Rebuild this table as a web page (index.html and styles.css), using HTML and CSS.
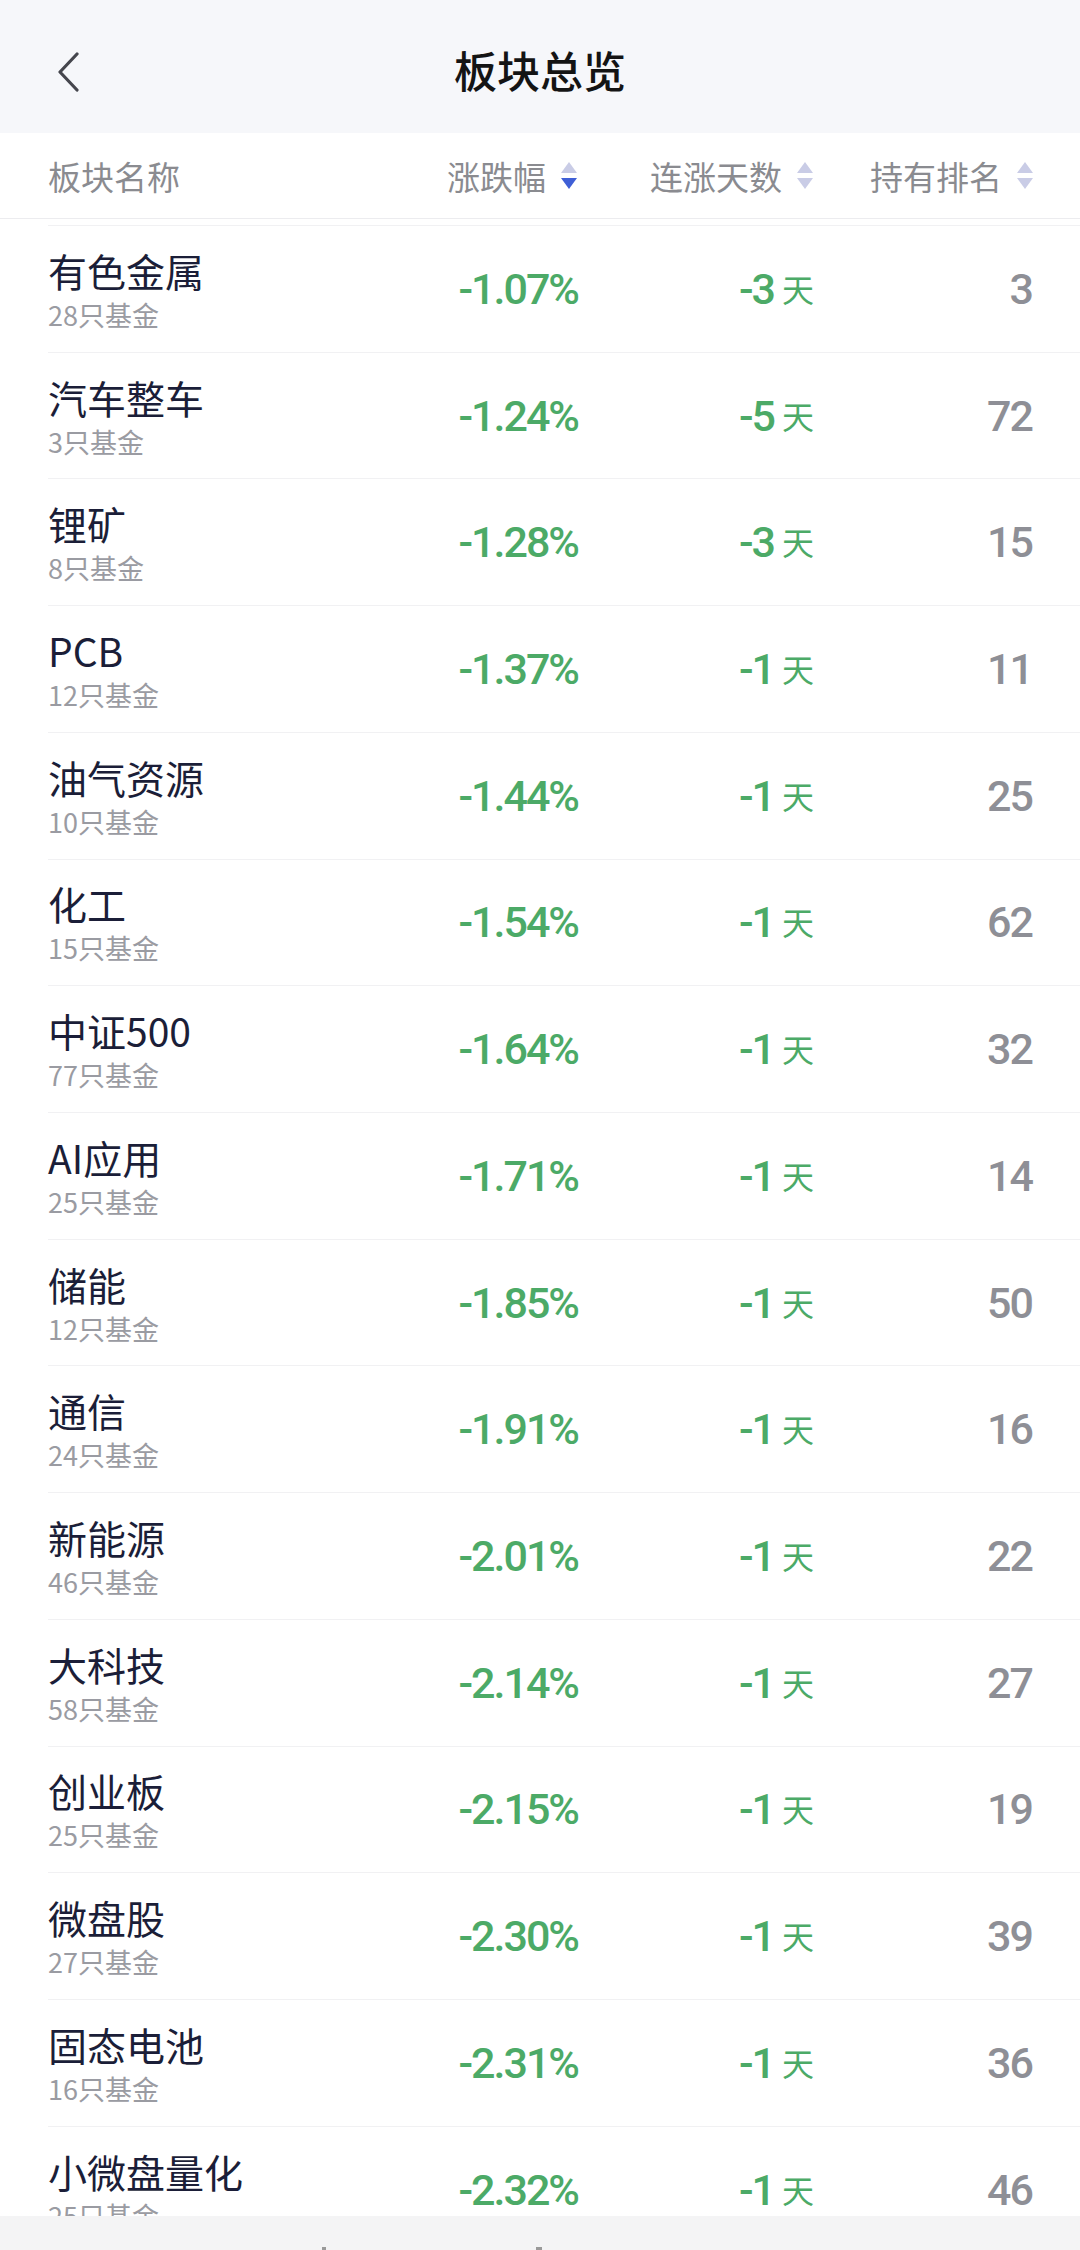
FILE: index.html
```html
<!DOCTYPE html>
<html lang="zh-CN">
<head>
<meta charset="utf-8">
<title>板块总览</title>
<link rel="stylesheet" href="styles.css">
</head>
<body>
<div class="page">
  <header class="topbar">
    <div class="back">
      <svg width="24" height="40" viewBox="0 0 24 40"><polyline points="21,2 4,20 21,38" fill="none" stroke="#45464d" stroke-width="3.2" stroke-linecap="round" stroke-linejoin="round"/></svg>
    </div>
    <div class="title">板块总览</div>
    <div class="back-spacer"></div>
  </header>

  <div class="colhead">
    <div class="ch ch-name">板块名称</div>
    <div class="ch ch-sort">涨跌幅
      <svg class="sort" width="18" height="30" viewBox="0 0 18 30"><polygon points="9,1 17,12 1,12" fill="#c9cce6"/><polygon points="1,17 17,17 9,28" fill="#3f5fd6"/></svg>
    </div>
    <div class="ch ch-sort">连涨天数
      <svg class="sort" width="18" height="30" viewBox="0 0 18 30"><polygon points="9,1 17,12 1,12" fill="#c9cce6"/><polygon points="1,17 17,17 9,28" fill="#c9cce6"/></svg>
    </div>
    <div class="ch ch-sort">持有排名
      <svg class="sort" width="18" height="30" viewBox="0 0 18 30"><polygon points="9,1 17,12 1,12" fill="#c9cce6"/><polygon points="1,17 17,17 9,28" fill="#c9cce6"/></svg>
    </div>
  </div>

  <div class="list">
    <div class="row"><div class="name"><div class="n">有色金属</div><div class="s">28只基金</div></div><div class="val">-1.07%</div><div class="days">-3<span class="d">天</span></div><div class="rank">3</div></div>
    <div class="row"><div class="name"><div class="n">汽车整车</div><div class="s">3只基金</div></div><div class="val">-1.24%</div><div class="days">-5<span class="d">天</span></div><div class="rank">72</div></div>
    <div class="row"><div class="name"><div class="n">锂矿</div><div class="s">8只基金</div></div><div class="val">-1.28%</div><div class="days">-3<span class="d">天</span></div><div class="rank">15</div></div>
    <div class="row"><div class="name"><div class="n">PCB</div><div class="s">12只基金</div></div><div class="val">-1.37%</div><div class="days">-1<span class="d">天</span></div><div class="rank">11</div></div>
    <div class="row"><div class="name"><div class="n">油气资源</div><div class="s">10只基金</div></div><div class="val">-1.44%</div><div class="days">-1<span class="d">天</span></div><div class="rank">25</div></div>
    <div class="row"><div class="name"><div class="n">化工</div><div class="s">15只基金</div></div><div class="val">-1.54%</div><div class="days">-1<span class="d">天</span></div><div class="rank">62</div></div>
    <div class="row"><div class="name"><div class="n">中证500</div><div class="s">77只基金</div></div><div class="val">-1.64%</div><div class="days">-1<span class="d">天</span></div><div class="rank">32</div></div>
    <div class="row"><div class="name"><div class="n">AI应用</div><div class="s">25只基金</div></div><div class="val">-1.71%</div><div class="days">-1<span class="d">天</span></div><div class="rank">14</div></div>
    <div class="row"><div class="name"><div class="n">储能</div><div class="s">12只基金</div></div><div class="val">-1.85%</div><div class="days">-1<span class="d">天</span></div><div class="rank">50</div></div>
    <div class="row"><div class="name"><div class="n">通信</div><div class="s">24只基金</div></div><div class="val">-1.91%</div><div class="days">-1<span class="d">天</span></div><div class="rank">16</div></div>
    <div class="row"><div class="name"><div class="n">新能源</div><div class="s">46只基金</div></div><div class="val">-2.01%</div><div class="days">-1<span class="d">天</span></div><div class="rank">22</div></div>
    <div class="row"><div class="name"><div class="n">大科技</div><div class="s">58只基金</div></div><div class="val">-2.14%</div><div class="days">-1<span class="d">天</span></div><div class="rank">27</div></div>
    <div class="row"><div class="name"><div class="n">创业板</div><div class="s">25只基金</div></div><div class="val">-2.15%</div><div class="days">-1<span class="d">天</span></div><div class="rank">19</div></div>
    <div class="row"><div class="name"><div class="n">微盘股</div><div class="s">27只基金</div></div><div class="val">-2.30%</div><div class="days">-1<span class="d">天</span></div><div class="rank">39</div></div>
    <div class="row"><div class="name"><div class="n">固态电池</div><div class="s">16只基金</div></div><div class="val">-2.31%</div><div class="days">-1<span class="d">天</span></div><div class="rank">36</div></div>
    <div class="row"><div class="name"><div class="n">小微盘量化</div><div class="s">25只基金</div></div><div class="val">-2.32%</div><div class="days">-1<span class="d">天</span></div><div class="rank">46</div></div>
  </div>

  <div class="bottombar"><span class="mark m1"></span><span class="mark m2"></span></div>
</div>
</body>
</html>
```
FILE: styles.css
```css
html, body {
  margin: 0;
  padding: 0;
  background: #ffffff;
}
body {
  font-family: "Noto Sans CJK SC", "Noto Sans", sans-serif;
}
.page {
  width: 1080px;
  height: 2250px;
  display: flex;
  flex-direction: column;
  overflow: hidden;
  background: #ffffff;
}
.topbar {
  height: 133px;
  flex: none;
  background: #f6f7fa;
  display: flex;
  align-items: center;
  padding: 0 0 0 56px;
  box-sizing: border-box;
}
.back {
  width: 24px;
  height: 40px;
  display: flex;
  margin-top: 10px;
}
.back-spacer {
  width: 24px;
  margin-right: 56px;
}
.title {
  flex: 1;
  text-align: center;
  font-size: 43px;
  font-weight: 500;
  color: #141414;
  margin-top: 4px;
  letter-spacing: 0;
}
.colhead {
  height: 85px;
  flex: none;
  display: grid;
  grid-template-columns: 1fr 122px 236px 220px;
  align-items: center;
  padding: 0 46px 0 48px;
  border-bottom: 1px solid #ececef;
  font-size: 33px;
  color: #8a8b90;
}
.ch-sort {
  display: flex;
  align-items: center;
  justify-content: flex-end;
  white-space: nowrap;
}
.sort {
  margin-left: 14px;
  flex: none;
}
.list {
  flex: 1;
  overflow: hidden;
  padding-top: 6px;
}
.row {
  height: 126.73px;
  box-sizing: border-box;
  margin-left: 48px;
  padding-right: 48px;
  border-top: 1px solid #f1f1f3;
  display: grid;
  grid-template-columns: 1fr 122px 236px 218px;
  align-items: center;
}
.name {
  display: flex;
  flex-direction: column;
  gap: 8px;
}
.n {
  font-size: 39px;
  line-height: 44px;
  color: #1b1e38;
  white-space: nowrap;
}
.s {
  font-size: 27px;
  line-height: 30px;
  color: #9a9ba2;
}
.val, .days, .rank {
  font-family: Roboto, "Noto Sans", sans-serif;
  font-weight: 500;
  font-size: 43px;
  letter-spacing: -2px;
  text-align: right;
  white-space: nowrap;
}
.val, .days {
  color: #4caa67;
}
.d {
  font-family: "Noto Sans CJK SC", sans-serif;
  font-size: 32px;
  font-weight: 400;
  letter-spacing: 0;
  margin-left: 8px;
  vertical-align: 2px;
}
.rank {
  color: #8e8f96;
}
.bottombar {
  height: 34px;
  flex: none;
  background: #f4f4f5;
  display: flex;
  align-items: flex-end;
}
.mark {
  display: block;
  height: 3px;
  background: #9a9a9a;
}
.m1 {
  width: 4px;
  margin-left: 322px;
}
.m2 {
  width: 6px;
  margin-left: 210px;
}
```
